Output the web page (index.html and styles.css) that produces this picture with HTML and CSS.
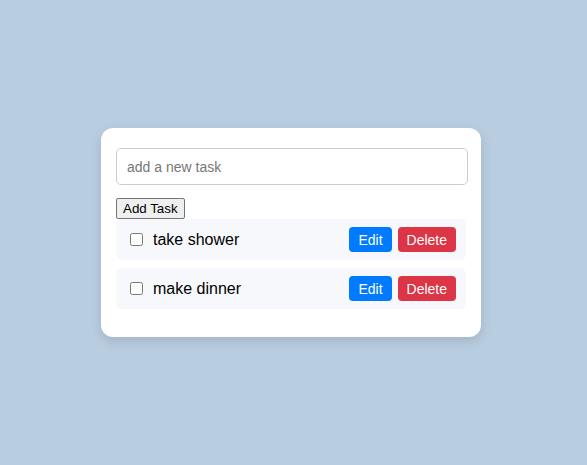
FILE: index.html
```html
<!DOCTYPE html>
<html lang="en">
<head>
<meta charset="utf-8">
<title>Todo</title>
<link rel="stylesheet" href="styles.css">
</head>
<body>
  <div class="card">
    <input class="task-input" type="text" placeholder="add a new task">
    <button class="add-btn">Add Task</button>
    <ul class="list">
      <li class="item">
        <input type="checkbox" class="check">
        <span class="label">take shower</span>
        <button class="btn edit">Edit</button>
        <button class="btn delete">Delete</button>
      </li>
      <li class="item">
        <input type="checkbox" class="check">
        <span class="label">make dinner</span>
        <button class="btn edit">Edit</button>
        <button class="btn delete">Delete</button>
      </li>
    </ul>
  </div>
</body>
</html>
```
FILE: styles.css
```css
html, body {
  height: 100%;
}
body {
  margin: 0;
  padding-right: 5px;
  box-sizing: border-box;
  background: #b9cde1;
  font-family: "Liberation Sans", Arial, sans-serif;
  display: flex;
  align-items: center;
  justify-content: center;
}
.card {
  width: 350px;
  background: #fff;
  border-radius: 12px;
  padding: 20px 15px 20px;
  box-shadow: 0 4px 12px rgba(0, 0, 0, 0.12);
  display: flex;
  flex-direction: column;
  align-items: flex-start;
}
.task-input {
  width: 352px;
  box-sizing: border-box;
  height: 37px;
  padding: 0 10px;
  font-family: "Liberation Sans", Arial, sans-serif;
  font-size: 14px;
  border: 1px solid #ccc;
  border-radius: 5px;
  margin: 0 0 13px;
  outline: none;
}
.task-input::placeholder {
  color: #777;
}
.add-btn {
  font-family: "Liberation Sans", Arial, sans-serif;
  font-size: 13.33px;
  margin: 0;
  height: 21px;
  padding: 1px 6px;
  border: 1px solid #767676;
  border-radius: 2px;
  background: #efefef;
  color: #000;
}
.list {
  list-style: none;
  margin: 0;
  padding: 0;
  width: 350px;
}
.item {
  display: flex;
  align-items: center;
  background: #f7f8fc;
  border-radius: 6px;
  padding: 8px 10px;
  margin-bottom: 8px;
  height: 25px;
}
.check {
  width: 13px;
  height: 13px;
  margin: 0 0 0 4px;
}
.label {
  flex: 1;
  margin-left: 10px;
  font-size: 16px;
  color: #000;
}
.btn {
  font-family: "Liberation Sans", Arial, sans-serif;
  font-size: 14px;
  color: #fff;
  border: none;
  border-radius: 4px;
  height: 25px;
  padding: 0 9px;
  margin-left: 6px;
}
.edit {
  background: #007bff;
}
.delete {
  background: #dc3545;
}
```
